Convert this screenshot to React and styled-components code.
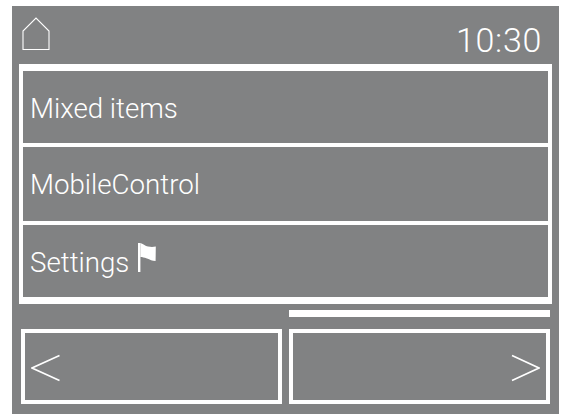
import React from "react";
import styled, { createGlobalStyle } from "styled-components";

const GlobalStyle = createGlobalStyle`
  html, body {
    margin: 0;
    padding: 0;
    background: #fff;
  }
`;

const items = [
  { id: "mixed", label: "Mixed items", height: 72, nudge: 3 },
  { id: "mobile", label: "MobileControl", height: 74, nudge: 1 },
  { id: "settings", label: "Settings", height: 72, nudge: 3, flag: true },
];

export default function App() {
  return (
    <>
      <GlobalStyle />
      <Screen>
        <Header>
          <svg width="28" height="34" viewBox="0 0 28 34">
            <path d="M1 32.5V14L14 1L27 14V32.5Z" fill="none" stroke="#fff" strokeWidth="1.1" />
          </svg>
          <Clock>10:30</Clock>
        </Header>

        <Menu>
          {items.map((el) => (
            <MenuRow key={el.id} $height={el.height}>
              <RowLabel $nudge={el.nudge}>{el.label}</RowLabel>
              {el.flag && (
                <FlagIcon width="20" height="32" viewBox="0 0 20 32">
                  <path d="M1 1H3.4V30H1Z" fill="#fff" />
                  <path d="M3.4 1C7 2 8 4 11 4.5C14 5 16 5 18.8 4.5L18.6 19C15 19 13 17.5 10 16.5C7 15.5 5.5 15 3.4 15Z" fill="#fff" />
                </FlagIcon>
              )}
            </MenuRow>
          ))}
        </Menu>

        <Progress />

        <Buttons>
          <NavButton $align="flex-start">
            <svg width="30" height="28" viewBox="0 0 30 28">
              <path d="M28.5 1.5L1 14L28.5 26.5" fill="none" stroke="#fff" strokeWidth="1.6" />
            </svg>
          </NavButton>
          <NavButton $align="flex-end">
            <svg width="30" height="28" viewBox="0 0 30 28">
              <path d="M2 1.5L29 14L2 26.5" fill="none" stroke="#fff" strokeWidth="1.6" />
            </svg>
          </NavButton>
        </Buttons>
      </Screen>
    </>
  );
}

const Screen = styled.div`
  width: 547px;
  height: 408px;
  margin: 6px 0 0 12px;
  padding: 0 7px;
  box-sizing: border-box;
  background: #818283;
  color: #fff;
  font-family: "Roboto", "Liberation Sans", sans-serif;
  font-weight: 300;
  overflow: hidden;
`;

const Header = styled.div`
  height: 58px;
  display: flex;
  justify-content: space-between;
  padding: 11px 10px 0 3px;
  box-sizing: border-box;
`;

const Clock = styled.div`
  font-size: 34px;
  line-height: 46px;
  letter-spacing: 0.7px;
`;

const Menu = styled.div`
  width: 533px;
  box-sizing: border-box;
  border: solid #fff;
  border-width: 7px 4px;
  display: flex;
  flex-direction: column;
  gap: 4px;
  background: #fff;
`;

const MenuRow = styled.div`
  height: ${(p) => p.$height}px;
  padding-left: 7px;
  display: flex;
  align-items: center;
  background: #818283;
  font-size: 27.7px;
`;

const RowLabel = styled.span`
  margin-top: ${(p) => p.$nudge}px;
`;

const FlagIcon = styled.svg`
  margin: -6px 0 0 8px;
`;

const Progress = styled.div`
  width: 261px;
  height: 7px;
  margin: 6px 0 0 270px;
  background: #fff;
`;

const Buttons = styled.div`
  display: flex;
  gap: 7px;
  margin: 12px 0 0 2px;
`;

const NavButton = styled.div`
  width: 261px;
  height: 75px;
  box-sizing: border-box;
  border: 4px solid #fff;
  padding: 3px 6px 0;
  display: flex;
  align-items: center;
  justify-content: ${(p) => p.$align};
`;
